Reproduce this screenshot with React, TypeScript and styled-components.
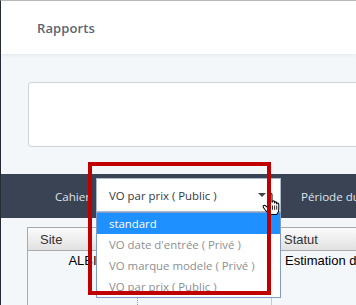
import React from "react";
import styled, { createGlobalStyle } from "styled-components";

const Global = createGlobalStyle`
  html, body { margin: 0; padding: 0; overflow: hidden; background: #f4f7fa; }
  * { box-sizing: border-box; }
`;

const Page = styled.div`
  position: relative;
  width: 356px;
  height: 305px;
  overflow: hidden;
  background: #f4f7fa;
  border-top: 1px solid #b8b8b8;
  border-left: 1px solid #252b35;
  font-family: "Open Sans", "Noto Sans", sans-serif;
`;

const Header = styled.header`
  height: 53px;
  background: #ffffff;
  display: flex;
  align-items: center;
  padding-left: 36px;
  box-shadow: 0 1px 4px rgba(0, 0, 0, 0.07);
  position: relative;
`;

const Title = styled.h1`
  margin: 0;
  font-size: 13px;
  font-weight: 600;
  color: #5b6471;
  letter-spacing: 0.1px;
`;

const Main = styled.main`
  padding: 28px 0 0 27px;
`;

const Card = styled.div`
  height: 65px;
  margin-right: -12px;
  background: #ffffff;
  border: 1px solid #cfd4d8;
  border-radius: 3px;
`;

const FilterBar = styled.div`
  margin-top: 27px;
  height: 44px;
  background: #3a4353;
  display: flex;
  align-items: center;
  padding-left: 54px;
  white-space: nowrap;
`;

const BarLabel = styled.span<{ $width?: number }>`
  font-size: 11.6px;
  color: #dfe3e8;
  width: ${(p) => (p.$width ? `${p.$width}px` : "auto")};
  overflow: hidden;
  flex-shrink: 0;
`;

const SelectWrap = styled.div`
  position: relative;
  width: 185px;
  height: 34px;
  margin-top: -2px;
  margin-right: 20px;
  flex-shrink: 0;
`;

const SelectBox = styled.div`
  height: 100%;
  background: #ffffff;
  border: 1px solid #a9b9cf;
  display: flex;
  align-items: center;
  padding-left: 12px;
  font-size: 11.4px;
  color: #333a44;
`;

const Arrow = styled.span`
  position: absolute;
  right: 15px;
  top: 15px;
  width: 0;
  height: 0;
  border-left: 4px solid transparent;
  border-right: 4px solid transparent;
  border-top: 4px solid #444;
`;

const List = styled.ul`
  position: absolute;
  top: 100%;
  left: 0;
  width: 185px;
  margin: 0;
  padding: 0;
  list-style: none;
  background: #ffffff;
  border: 1px solid #7f9dc6;
  z-index: 5;
`;

const Option = styled.li<{ $active?: boolean }>`
  height: 21px;
  line-height: 21px;
  padding-left: 12px;
  font-size: 11.4px;
  color: ${(p) => (p.$active ? "#ffffff" : "#8c8f94")};
  background: ${(p) => (p.$active ? "#1e90ff" : "transparent")};
  white-space: nowrap;
`;

const TableArea = styled.div`
  margin-top: 9px;
  padding-left: 26px;
`;

const Table = styled.div`
  width: 360px;
  border-left: 1px solid #aaaaaa;
  border-top: 1px solid #aaaaaa;
  display: grid;
  grid-template-columns: 110px 134px 1fr;
  font-family: "Liberation Sans", Arial, sans-serif;
  font-size: 13px;
`;

const HeadCell = styled.div`
  height: 23px;
  display: flex;
  align-items: center;
  padding-left: 12px;
  color: #333333;
  background: linear-gradient(#fbfbfb, #e1e1e1);
  border-bottom: 1px solid #aaaaaa;
  border-right: 1px solid #c4c4c4;
`;

const BodyCell = styled.div<{ $center?: boolean; $border?: "dotted" | "solid" }>`
  height: 60px;
  padding-top: 2px;
  padding-left: ${(p) => (p.$center ? "0" : "13px")};
  text-align: ${(p) => (p.$center ? "center" : "left")};
  color: #000000;
  white-space: nowrap;
  border-right: ${(p) =>
    p.$border === "dotted" ? "1px dotted #9a9a9a" : p.$border === "solid" ? "1px solid #c8c8c8" : "none"};
`;

const Highlight = styled.div`
  position: absolute;
  left: 87px;
  top: 161px;
  width: 183px;
  height: 133px;
  border: 4px solid #c00000;
  z-index: 20;
  pointer-events: none;
`;

const Cursor = styled.svg`
  position: absolute;
  left: 261px;
  top: 192px;
  z-index: 10;
`;

export default function App() {
  return (
    <>
      <Global />
      <Page>
        <Header>
          <Title>Rapports</Title>
        </Header>
        <Main>
          <Card />
        </Main>
        <FilterBar>
          <BarLabel $width={41}>Cahier</BarLabel>
          <SelectWrap>
            <SelectBox>VO par prix ( Public )</SelectBox>
            <Arrow />
            <List>
              <Option $active>standard</Option>
              <Option>VO date d'entrée ( Privé )</Option>
              <Option>VO marque modele ( Privé )</Option>
              <Option>VO par prix ( Public )</Option>
            </List>
          </SelectWrap>
          <BarLabel>Période du</BarLabel>
        </FilterBar>
        <TableArea>
          <Table>
            <HeadCell>Site</HeadCell>
            <HeadCell></HeadCell>
            <HeadCell>Statut</HeadCell>
            <BodyCell $center $border="dotted">ALBI</BodyCell>
            <BodyCell $border="solid"></BodyCell>
            <BodyCell>Estimation du prix</BodyCell>
          </Table>
        </TableArea>
        <Cursor width="20" height="23" viewBox="0 0 19 22">
          <path
            d="M7.5 1.5 C7.5 0.9 8 0.5 8.5 0.5 C9 0.5 9.5 0.9 9.5 1.5 L9.5 8.5 L10 8.5 C10 7.9 10.5 7.5 11 7.5 C11.5 7.5 12 7.9 12 8.5 L12 9.5 C12 8.9 12.5 8.5 13 8.5 C13.5 8.5 14 8.9 14 9.5 L14 10.5 C14 9.9 14.5 9.5 15 9.5 C15.6 9.5 16 9.9 16 10.5 L16 15.5 C16 17.5 15 19.5 14 20.5 L7 20.5 C6 19.5 4 17.5 2.5 15.5 L1.3 13.8 C0.8 13.1 1 12.3 1.7 11.9 C2.3 11.6 3 11.8 3.5 12.4 L7.5 15.5 Z"
            fill="#ffffff"
            stroke="#000000"
            strokeWidth="1"
            strokeLinejoin="round"
          />
          <path d="M10 12 L10 16 M12 12 L12 16 M14 12 L14 16" stroke="#000" strokeWidth="0.8" />
        </Cursor>
        <Highlight />
      </Page>
    </>
  );
}
